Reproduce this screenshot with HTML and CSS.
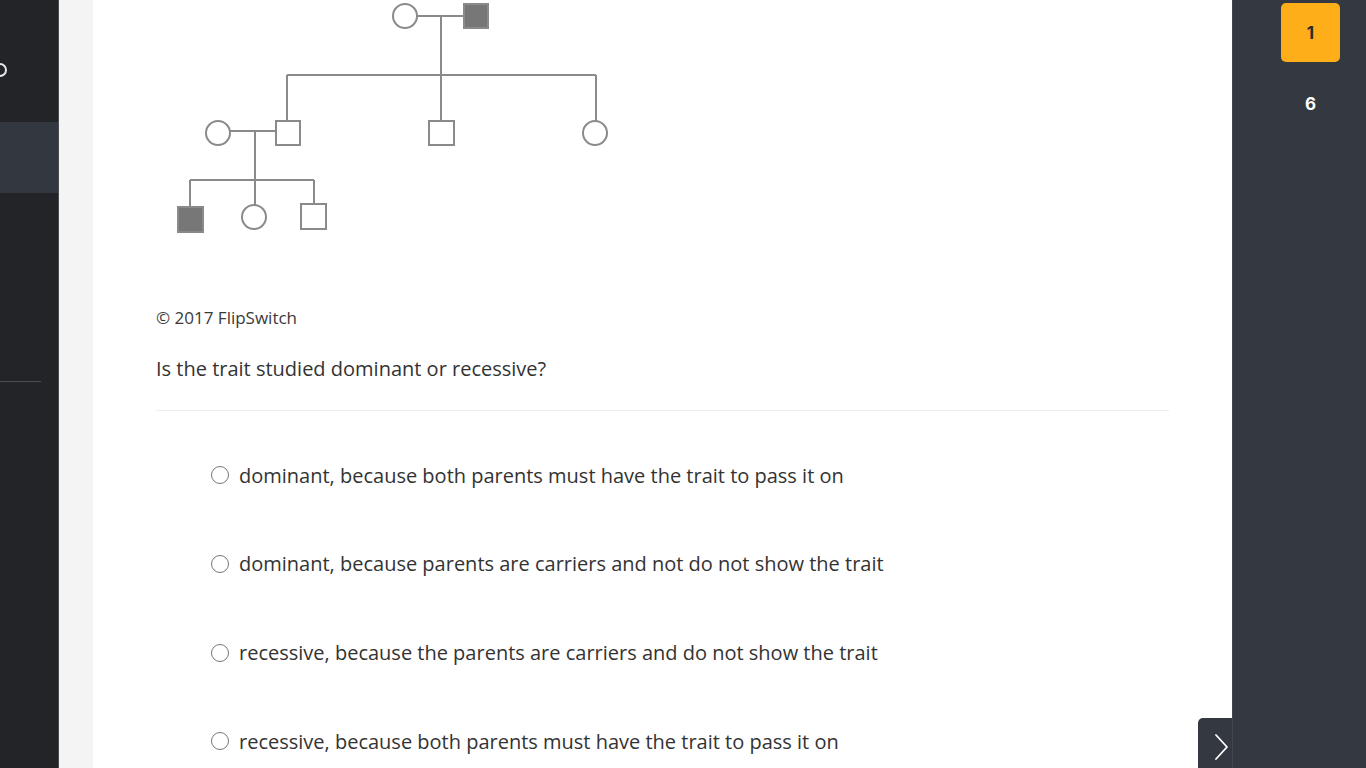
FILE: index.html
```html
<!DOCTYPE html>
<html>
<head>
<meta charset="utf-8">
<link rel="stylesheet" href="styles.css">
</head>
<body>
<div class="app">
  <aside class="left">
    <div class="left-icon"></div>
    <div class="left-active"></div>
    <div class="left-rule"></div>
  </aside>
  <div class="gutter"></div>
  <main class="main">
    <svg class="pedigree" width="480" height="245" viewBox="150 0 480 245">
      <g stroke="#8a8a8a" stroke-width="2" fill="none">
        <line x1="417" y1="16" x2="464" y2="16"/>
        <line x1="441" y1="16" x2="441" y2="121"/>
        <line x1="287" y1="75" x2="596" y2="75"/>
        <line x1="287" y1="75" x2="287" y2="121"/>
        <line x1="596" y1="75" x2="596" y2="121"/>
        <line x1="230" y1="131" x2="276" y2="131"/>
        <line x1="255" y1="131" x2="255" y2="205"/>
        <line x1="190" y1="180" x2="314" y2="180"/>
        <line x1="190" y1="180" x2="190" y2="207"/>
        <line x1="314" y1="180" x2="314" y2="204"/>
        <circle cx="405" cy="16" r="12" fill="#fff"/>
        <rect x="464" y="4" width="24" height="24" fill="#777"/>
        <circle cx="218" cy="133" r="12" fill="#fff"/>
        <rect x="276" y="121" width="24" height="24" fill="#fff"/>
        <rect x="429" y="121" width="25" height="24" fill="#fff"/>
        <circle cx="595" cy="133" r="12" fill="#fff"/>
        <rect x="178" y="207" width="25" height="25" fill="#777"/>
        <circle cx="254" cy="217" r="12" fill="#fff"/>
        <rect x="301" y="204" width="25" height="25" fill="#fff"/>
      </g>
    </svg>
    <p class="copy">© 2017 FlipSwitch</p>
    <p class="question">Is the trait studied dominant or recessive?</p>
    <hr class="rule">
    <ul class="options">
      <li class="option"><span class="radio"></span>dominant, because both parents must have the trait to pass it on</li>
      <li class="option"><span class="radio"></span>dominant, because parents are carriers and not do not show the trait</li>
      <li class="option"><span class="radio"></span>recessive, because the parents are carriers and do not show the trait</li>
      <li class="option"><span class="radio"></span>recessive, because both parents must have the trait to pass it on</li>
    </ul>
  </main>
  <aside class="right">
    <div class="num active">1</div>
    <div class="num">6</div>
  </aside>
  <div class="next-tab">
    <svg width="16" height="28" viewBox="0 0 16 28"><polyline points="3,2 14,14 3,26" fill="none" stroke="#fff" stroke-width="1.8" stroke-linecap="round" stroke-linejoin="round"/></svg>
  </div>
</div>
</body>
</html>
```

FILE: styles.css
```css
html, body {
  margin: 0;
  padding: 0;
  height: 100%;
  overflow: hidden;
}
body {
  font-family: "Open Sans", "Liberation Sans", sans-serif;
  color: #333;
  background: #fff;
}
.app {
  display: flex;
  height: 768px;
  position: relative;
}
.left {
  width: 58px;
  flex: none;
  background: #222428;
  border-right: 1px solid #4a4c52;
  position: relative;
}
.left-icon {
  position: absolute;
  left: -7px;
  top: 63px;
  width: 10px;
  height: 10px;
  border: 2px solid #e8e8e8;
  border-radius: 50%;
}
.left-active {
  margin-top: 122px;
  height: 71px;
  background: #333740;
}
.left-rule {
  margin-top: 188px;
  width: 41px;
  height: 1px;
  background: #4b4e55;
}
.gutter {
  width: 34px;
  flex: none;
  background: #f4f4f4;
}
.main {
  flex: 1;
  padding: 0 63px;
  background: #fff;
}
.pedigree {
  display: block;
  margin-left: -6px;
}
.copy {
  margin: 62px 0 0;
  font-size: 17px;
  line-height: 22px;
  color: #3a3a3a;
}
.question {
  margin: 27px 0 0;
  font-size: 20px;
  line-height: 26px;
  color: #333;
}
.rule {
  margin: 28px 0 0;
  border: 0;
  border-top: 1px solid #ececec;
}
.options {
  list-style: none;
  margin: 0;
  padding: 0 0 0 55px;
}
.option {
  display: flex;
  align-items: center;
  height: 88.67px;
  font-size: 20px;
  color: #333;
}
.option:first-child {
  margin-top: 20px;
}
.radio {
  width: 18px;
  height: 18px;
  border: 1.5px solid #777;
  border-radius: 50%;
  margin-right: 10px;
  flex: none;
  box-sizing: border-box;
}
.right {
  width: 134px;
  flex: none;
  background: #343841;
  border-left: 1px solid #43464d;
  display: flex;
  flex-direction: column;
  align-items: center;
  padding-top: 3px;
  box-sizing: border-box;
}
.num {
  width: 59px;
  height: 59px;
  display: flex;
  align-items: center;
  justify-content: center;
  font-family: "Inter", "Open Sans", sans-serif;
  font-weight: 700;
  font-size: 17px;
  color: #fff;
  margin-left: 22px;
  margin-bottom: 12px;
}
.num.active {
  background: #fdae19;
  color: #2a2a2a;
  border-radius: 5px;
}
.next-tab {
  position: absolute;
  left: 1198px;
  top: 718px;
  width: 34px;
  height: 50px;
  background: #343841;
  border-top-left-radius: 5px;
  display: flex;
  align-items: center;
  justify-content: center;
  padding-top: 8px;
  padding-left: 12px;
  box-sizing: border-box;
}
```
